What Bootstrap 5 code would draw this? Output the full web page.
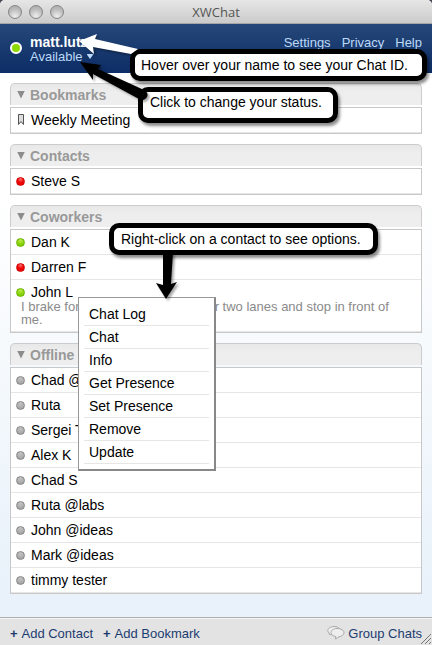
<!DOCTYPE html>
<html lang="en">
<head>
<meta charset="utf-8">
<meta name="viewport" content="width=device-width, initial-scale=1">
<title>XWChat</title>
<link href="https://cdn.jsdelivr.net/npm/bootstrap@5.3.0/dist/css/bootstrap.min.css" rel="stylesheet">
<style>
body{font-family:"Liberation Sans",Arial,sans-serif;font-size:14px;line-height:16px;color:#000;background:#4a4450}
button{font:inherit;color:inherit;background:none;border:0;padding:0;text-align:left}
a{text-decoration:none}
.window{background:linear-gradient(#fff 30%,#e9f2fa 90%);border-radius:5px 5px 0 0;overflow:hidden}
.titlebar{height:24px;background:linear-gradient(#e6e6e6,#cbcbcb);border-bottom:1px solid #a6a6a6;padding:0 8px}
.titlebar h1{font:13px/22px "Open Sans","Noto Sans",sans-serif;color:#555;margin:0}
.lights{gap:7px;width:56px}
.lights button{width:14px;height:14px;border-radius:50%;border:1px solid #858585;background:radial-gradient(circle at 50% 85%,#eee,#bbb 60%,#aaa)}
.masthead{height:49px;background:linear-gradient(#264778,#0c2d66);padding:11px 10px 0}
.masthead a{color:#bcd9f7;font-size:13px}
.masthead nav{gap:11px}
.me{font-size:14px;line-height:15px}
.me strong{color:#fff}
.me button{color:#bcd9f7;font-size:13px;line-height:13px}
.caret{width:7px;height:5px;background:#bcd9f7;clip-path:polygon(0 0,100% 0,50% 100%)}
.dot{flex:none;width:9px;height:9px;border-radius:50%}
.online{background:radial-gradient(circle at 50% 20%,#b9e94a,#7fcf00 70%);border:1px solid #6cb400}
.busy{background:radial-gradient(circle at 50% 15%,#ff7070,#ee0505 50%);border:1px solid #d00000}
.away{background:radial-gradient(circle at 50% 15%,#c4c4c4,#9e9e9e);border:1px solid #858585}
.own{width:12px;height:12px;border:2px solid #fff;background:#8bdc00;margin-top:7px}
.roster{padding:10px 10px 0}
.bunch{margin-bottom:10px}
.bunch h2{margin:0 0 2px;font-size:14px;line-height:16px}
.bunch h2 button{height:22px;font-weight:bold;color:#999;padding:0 6px;gap:5px;border:1px solid #ccc;border-bottom:0;border-radius:5px 5px 0 0;background:linear-gradient(#e8e8e8,#eee 40%)}
.tri{width:8px;height:8px;background:#8c8c8c;clip-path:polygon(0 0,100% 0,50% 100%)}
.people{border:1px solid #c8c8c8;background:#fff;margin:0}
.people li{border-bottom:1px solid #e6e6e6;min-height:25px}
.people a{color:#000;height:24px;padding-left:5px;gap:6px}
.people p{margin:-4px 0 0;color:#8a8a8a;font-size:13px;line-height:13px;min-height:31px;padding:0 20px 0 10px}
.footbar{height:28px;background:#e3e3e3;border-top:1px solid #b0b0b0;box-shadow:inset 0 1px #f4f4f4;padding:4px 10px 0;gap:10px}
.footbar a{color:#1c3c70;font-size:13px}
.footbar b{margin-right:1px}
.footbar .rooms{gap:3px}
.grip{right:0;bottom:0}
.menu{left:78px;top:297px;width:138px;height:174px;background:#fff;border:1px solid #999;border-right:2px solid #888;border-bottom:2px solid #888;padding:5px 5px 0;margin:0}
.menu li{border-bottom:1px solid #e6e6e6}
.menu button{height:22px;padding:0 5px;width:100%}
.tip{background:#fff;border:5px solid #000;border-radius:10px;box-shadow:2px 3px 3px rgba(0,0,0,.45);white-space:nowrap;display:flex;align-items:center}
.tip-name{left:130px;top:49px;width:297px;height:32px;padding-left:6px}
.tip-status{left:138px;top:87px;width:200px;height:36px;padding:0 0 6px 7px}
.tip-menu{left:109px;top:223px;width:269px;height:32px;padding-left:7px}
.arrows{left:0;top:0;pointer-events:none;filter:drop-shadow(2px 2px 1px rgba(0,0,0,.35))}
</style>
<script src="https://cdn.jsdelivr.net/npm/bootstrap@5.3.0/dist/js/bootstrap.bundle.min.js"></script>
</head>
<body>
<div class="window position-relative d-flex flex-column min-vh-100">
  <div class="titlebar d-flex align-items-center">
    <div class="lights d-flex"><button aria-label="Close"></button><button aria-label="Minimize"></button><button aria-label="Zoom"></button></div>
    <h1 class="flex-grow-1 text-center">XWChat</h1><span class="lights"></span>
  </div>
  <header class="masthead d-flex justify-content-between align-items-start">
    <div class="d-flex gap-2"><span class="dot own"></span>
      <div class="me d-flex flex-column"><strong>matt.lutz</strong><button class="d-flex align-items-center gap-1">Available <span class="caret"></span></button></div>
    </div>
    <nav class="d-flex"><a href="#">Settings</a><a href="#">Privacy</a><a href="#">Help</a></nav>
  </header>
  <main class="roster flex-grow-1">
    <section class="bunch">
      <h2><button class="w-100 d-flex align-items-center"><span class="tri"></span>Bookmarks</button></h2>
      <ul class="people list-unstyled"><li><a href="#" class="d-flex align-items-center"><svg width="9" height="12" viewBox="0 0 9 12" aria-hidden="true"><path d="M2.500 .5h5v10L5 7.500 2.500 10.500z" fill="#ddd" stroke="#555"/></svg>Weekly Meeting</a></li></ul>
    </section>
    <section class="bunch">
      <h2><button class="w-100 d-flex align-items-center"><span class="tri"></span>Contacts</button></h2>
      <ul class="people list-unstyled"><li><a href="#" class="d-flex align-items-center"><span class="dot busy"></span>Steve S</a></li></ul>
    </section>
    <section class="bunch">
      <h2><button class="w-100 d-flex align-items-center"><span class="tri"></span>Coworkers</button></h2>
      <ul class="people list-unstyled">
        <li><a href="#" class="d-flex align-items-center"><span class="dot online"></span>Dan K</a></li>
        <li><a href="#" class="d-flex align-items-center"><span class="dot busy"></span>Darren F</a></li>
        <li><a href="#" class="d-flex align-items-center"><span class="dot online"></span>John L</a><p>I brake for people who merge over two lanes and stop in front of me.</p></li>
      </ul>
    </section>
    <section class="bunch">
      <h2><button class="w-100 d-flex align-items-center"><span class="tri"></span>Offline</button></h2>
      <ul class="people list-unstyled">
        <li><a href="#" class="d-flex align-items-center"><span class="dot away"></span>Chad @ideas</a></li>
        <li><a href="#" class="d-flex align-items-center"><span class="dot away"></span>Ruta</a></li>
        <li><a href="#" class="d-flex align-items-center"><span class="dot away"></span>Sergei T</a></li>
        <li><a href="#" class="d-flex align-items-center"><span class="dot away"></span>Alex K</a></li>
        <li><a href="#" class="d-flex align-items-center"><span class="dot away"></span>Chad S</a></li>
        <li><a href="#" class="d-flex align-items-center"><span class="dot away"></span>Ruta @labs</a></li>
        <li><a href="#" class="d-flex align-items-center"><span class="dot away"></span>John @ideas</a></li>
        <li><a href="#" class="d-flex align-items-center"><span class="dot away"></span>Mark @ideas</a></li>
        <li><a href="#" class="d-flex align-items-center"><span class="dot away"></span>timmy tester</a></li>
      </ul>
    </section>
  </main>
  <footer class="footbar d-flex align-items-center position-relative">
    <a href="#"><b>+</b> Add Contact</a><a href="#"><b>+</b> Add Bookmark</a>
    <a href="#" class="rooms ms-auto d-flex align-items-center"><svg width="18" height="18" viewBox="0 0 18 18" aria-hidden="true"><g fill="#eee" stroke="#aaa"><path d="M2 8C-1 5 2 1.500 7 1.500c3 0 5 1 6 3L6 9 3 10z"/><path d="M10 3.500c4 0 7 1.800 7 4.200 0 2.300-2.500 3.800-5 4L8.500 14l.3-2.500C6 11 4 9.700 4 7.700c0-2.400 2.500-4.200 6-4.200z"/></g></svg>Group Chats</a>
    <svg class="grip position-absolute" width="12" height="12" aria-hidden="true"><path d="M1 11L11 1M5 11l6-6M9 11l2-2" stroke="#777"/></svg>
  </footer>

  <ul class="menu list-unstyled position-absolute">
    <li><button>Chat Log</button></li><li><button>Chat</button></li><li><button>Info</button></li><li><button>Get Presence</button></li><li><button>Set Presence</button></li><li><button>Remove</button></li><li><button>Update</button></li>
  </ul>
  <div class="tip tip-name position-absolute">Hover over your name to see your Chat ID.</div>
  <div class="tip tip-status position-absolute">Click to change your status.</div>
  <div class="tip tip-menu position-absolute">Right-click on a contact to see options.</div>
  <svg class="arrows position-absolute" width="432" height="310" viewBox="0 0 432 310" aria-hidden="true">
    <path d="M79 41L97 34L95 39L138 49L131 54L93 47L94 54z" fill="#fff"/>
    <path d="M80 62L101 65L98 69L144 90Q149 93 147 97Q144 102 139 99L93 74L93 80z"/>
    <path d="M163 253h10L171 284l6-2L166 299L156 283l7 2z"/>
  </svg>
</div>
</body>
</html>
